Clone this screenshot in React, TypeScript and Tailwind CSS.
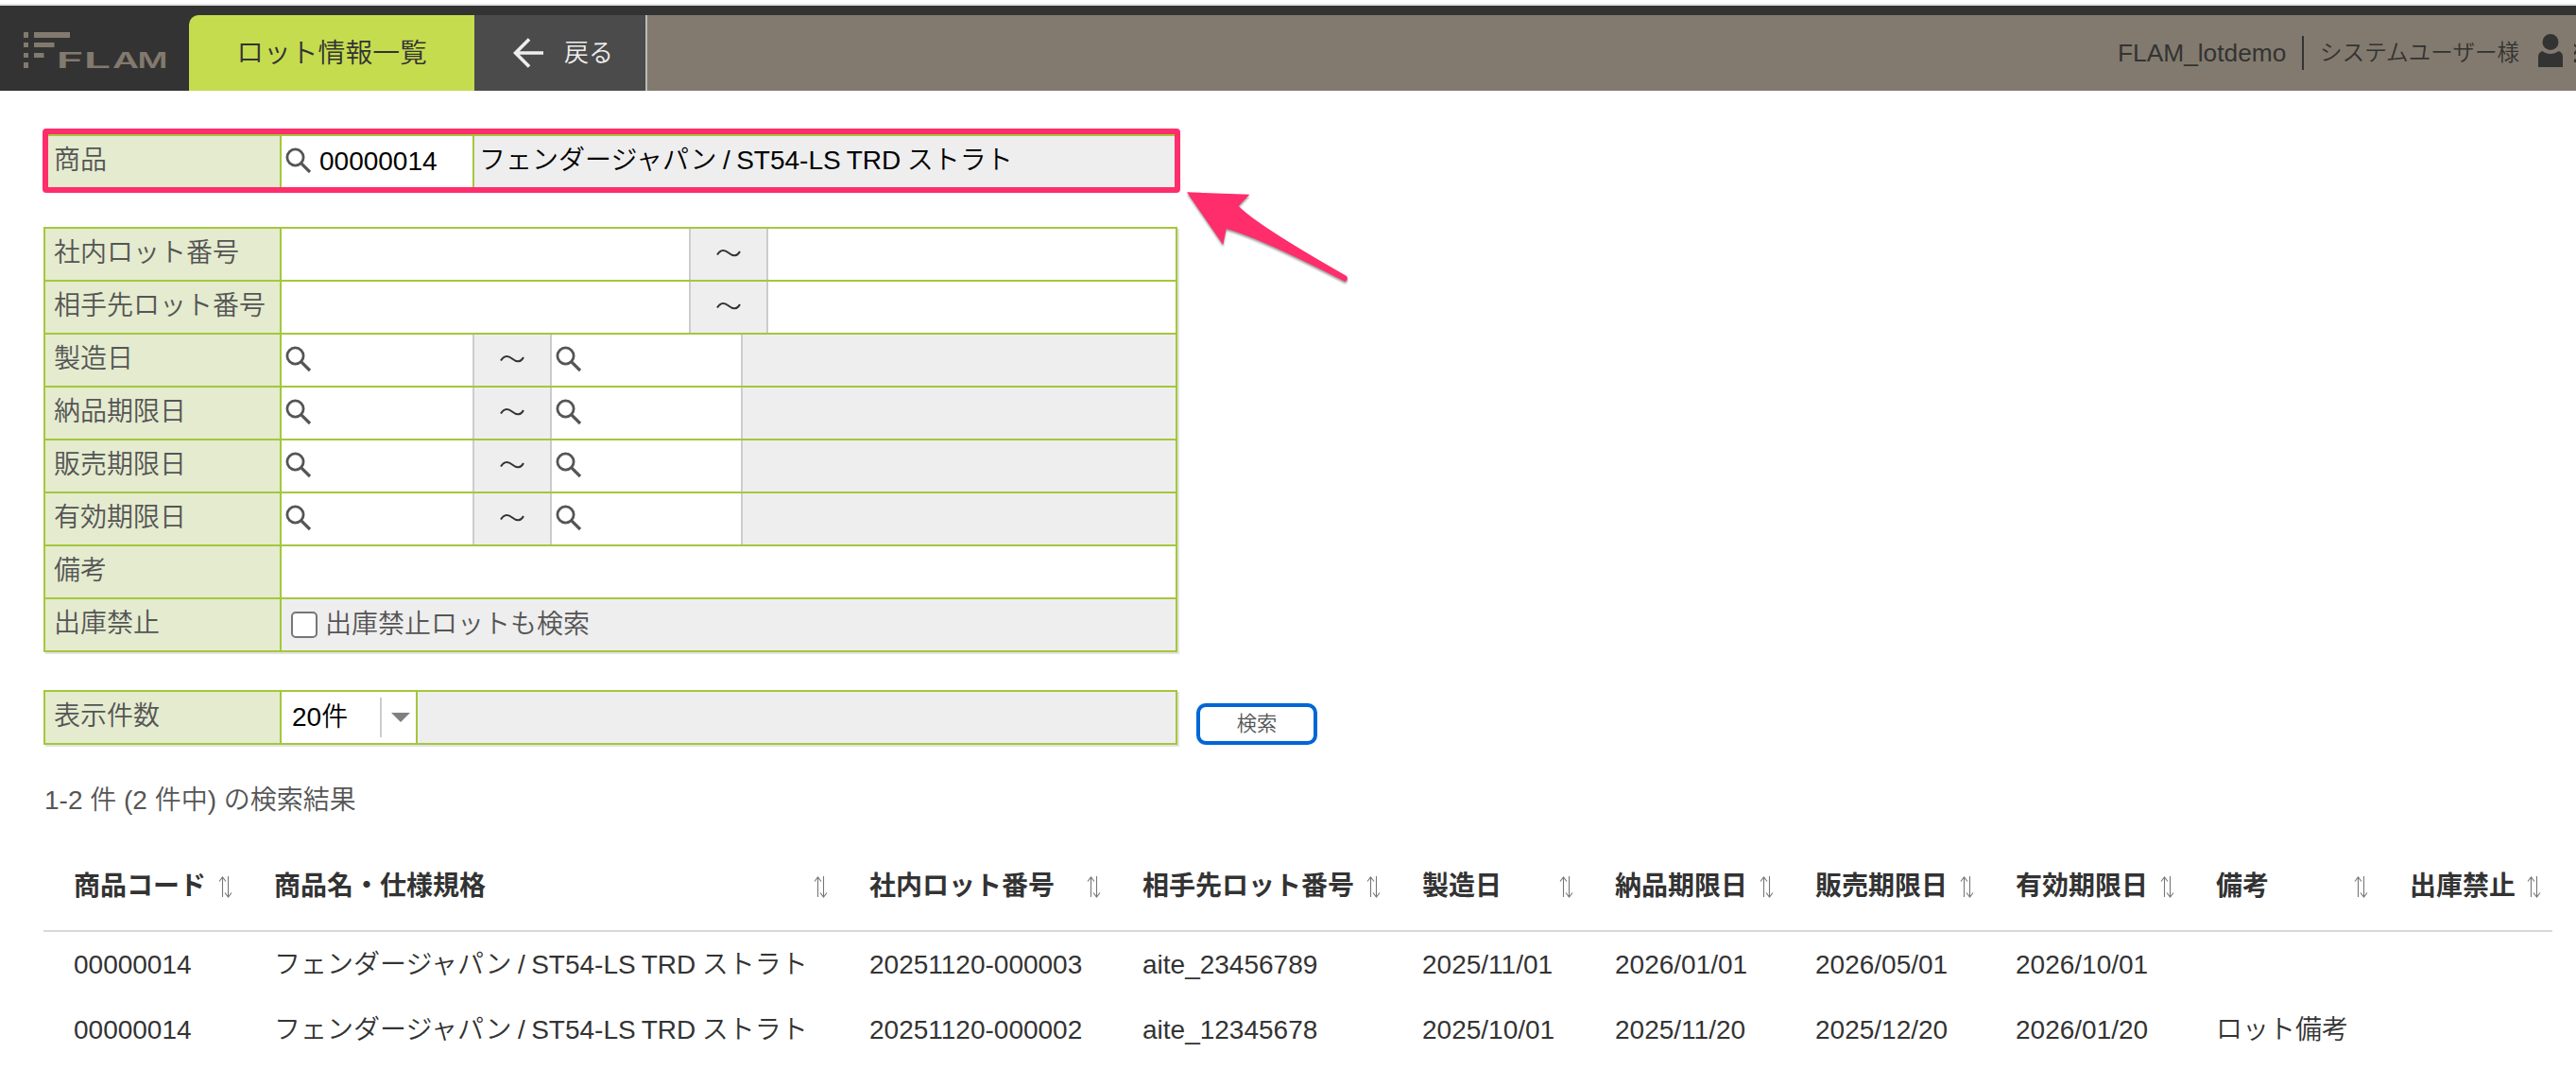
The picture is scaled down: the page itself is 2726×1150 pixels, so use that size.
import React, { useState } from "react";

type RangeRow = {
    label: string;
    kind: "text" | "date";
};

type Lot = {
    code: string;
    name: string;
    lotNo: string;
    partnerLotNo: string;
    dates: string[];
    note: string;
};

const rangeRows: RangeRow[] = [
    { label: "社内ロット番号", kind: "text" },
    { label: "相手先ロット番号", kind: "text" },
    { label: "製造日", kind: "date" },
    { label: "納品期限日", kind: "date" },
    { label: "販売期限日", kind: "date" },
    { label: "有効期限日", kind: "date" },
];

const columns = [
    { label: "商品コード", width: "w-[212px]" },
    { label: "商品名・仕様規格", width: "w-[630px]" },
    { label: "社内ロット番号", width: "w-[289px]" },
    { label: "相手先ロット番号", width: "w-[296px]" },
    { label: "製造日", width: "w-[204px]" },
    { label: "納品期限日", width: "w-[212px]" },
    { label: "販売期限日", width: "w-[212px]" },
    { label: "有効期限日", width: "w-[212px]" },
    { label: "備考", width: "w-[205px]" },
    { label: "出庫禁止", width: "w-[183px]" },
];

const lots: Lot[] = [
    {
        code: "00000014",
        name: "フェンダージャパン / ST54-LS TRD ストラト",
        lotNo: "20251120-000003",
        partnerLotNo: "aite_23456789",
        dates: ["2025/11/01", "2026/01/01", "2026/05/01", "2026/10/01"],
        note: "",
    },
    {
        code: "00000014",
        name: "フェンダージャパン / ST54-LS TRD ストラト",
        lotNo: "20251120-000002",
        partnerLotNo: "aite_12345678",
        dates: ["2025/10/01", "2025/11/20", "2025/12/20", "2026/01/20"],
        note: "ロット備考",
    },
];

// Wide letters of the logo: x position and stretched width of each
const logoLetters = [
    { char: "F", x: 34.5, length: 29 },
    { char: "L", x: 63.5, length: 29 },
    { char: "A", x: 94, length: 28 },
    { char: "M", x: 120.5, length: 32 },
];

function Logo() {
    return (
        <svg width="156" height="48" viewBox="0 0 156 48" className="ml-[25px] mt-[18px] shrink-0 overflow-visible" fill="#827a6e">
            <path d="M0 0h5v6H0zM11 0h38v6H11zM0 11h5v5H0zM11 11h21.5v5H11zM0 22h5v5H0zM11 22h10.5v5H11zM0 32h5v6H0z" />
            {logoLetters.map((letter) => (
                <text key={letter.char} x={letter.x} y="38" fontSize="22.5" fontWeight="600" fontFamily="Inter, sans-serif" textLength={letter.length} lengthAdjust="spacingAndGlyphs">
                    {letter.char}
                </text>
            ))}
        </svg>
    );
}

function SearchIcon() {
    return (
        <svg width="28" height="28" viewBox="0 0 28 28" className="-mt-[2px] shrink-0" fill="none" stroke="#555">
            <circle cx="10.5" cy="10.5" r="8.6" strokeWidth="2.8" />
            <path d="M16.8 16.8l9.2 9.2" strokeWidth="3.2" />
        </svg>
    );
}

function SortIcon() {
    return (
        <svg width="15" height="23" viewBox="0 0 15 23" className="shrink-0" fill="none" stroke="#777" strokeWidth="1.1">
            <path d="M4.500 22V1M1 5.500L4.500 1 8 5.500M10.500 0v21.500M7 17.500l3.500 4.500 3.500-4.500" />
        </svg>
    );
}

function Label({ children }: { children: React.ReactNode }) {
    return <div className="w-[250px] shrink-0 whitespace-nowrap border-r-2 border-[#a4c73c] bg-[#e4ebcf] pl-[9px] leading-[52px] text-[#555]">{children}</div>;
}

function Tilde() {
    return (
        <div className="flex w-[84px] shrink-0 items-center justify-center border-x-2 border-[#ccc] bg-[#eee]">
            <svg width="26" height="10" viewBox="0 0 26 10" className="-mt-[3px]" fill="none" stroke="#333" strokeWidth="2">
                <path d="M1 6.500C4 1.500 8 0.500 13 4.500S22 8.500 25 3" />
            </svg>
        </div>
    );
}

export default function App() {
    const [includeBlocked, setIncludeBlocked] = useState(false);

    return (
        <div className="relative h-[1150px] w-[2726px] overflow-hidden bg-white pt-1 font-['Liberation_Sans','Noto_Sans_CJK_JP',sans-serif] text-[28px] font-[350] text-[#333]">
            {/* Header */}
            <div className="h-[2px] bg-[#e0e4e0]" />
            <header className="flex h-[90px] bg-[#333]">
                <div className="flex w-[200px] items-start pt-[10px]">
                    <Logo />
                </div>
                <div className="mt-[10px] w-[302px] rounded-tl-[10px] bg-[#c6dc4f] text-center text-[28.8px] leading-[80px]">ロット情報一覧</div>
                <button className="mt-[10px] flex w-[183px] items-center border-r-2 border-[#bbb] bg-[#4b4b4b] pl-[41px] text-[#eee]">
                    <svg width="32" height="32" viewBox="0 0 32 32" fill="none" stroke="currentColor" strokeWidth="3.6">
                        <path d="M32 16H2.5M17 1.5L2.5 16 17 30.5" />
                    </svg>
                    <span className="ml-[22px] text-[26px]">戻る</span>
                </button>
                <div className="mt-[10px] flex flex-1 items-center bg-[#827a6e]">
                    <div className="ml-[1556px] w-[181px] text-[26.300px] leading-[80px]">FLAM_lotdemo</div>
                    <div className="ml-[14px] h-9 w-[2px] bg-[#333]" />
                    <div className="ml-[17px] w-[218px] whitespace-nowrap text-[23.600px] leading-[80px]">システムユーザー様</div>
                    <svg width="26" height="35" viewBox="0 0 26 35" className="ml-[13px] -mt-[5px] shrink-0" fill="#333">
                        <circle cx="13" cy="8.500" r="8.500" />
                        <path d="M0 35V24c0-3 1.500-5 4.500-6 4.500 4 12.500 4 17 0 3 1 4.500 3 4.500 6v11z" />
                    </svg>
                    <svg width="2" height="22" viewBox="0 0 2 22" className="ml-[12px] shrink-0" fill="#333">
                        <path d="M0 1l2 2v2L0 4zM0 10l2-2v4l-2 1zM0 18l2-1v4H0z" />
                    </svg>
                </div>
            </header>

            <main className="pl-[46px]">
                {/* Product */}
                <div className="relative mt-[46px] w-[1200px]">
                    <div className="flex h-[58px] border-2 border-[#a4c73c] bg-[#eee] text-black">
                        <Label>商品</Label>
                        <div className="flex w-[204px] items-center border-r-2 border-[#a4c73c] bg-white pl-1">
                            <SearchIcon />
                            <span className="ml-2">00000014</span>
                        </div>
                        <div className="pl-[5px] leading-[52px] [word-spacing:-1.3px]">フェンダージャパン / ST54-LS TRD ストラト</div>
                    </div>
                    <div className="pointer-events-none absolute -left-[1px] -top-[6px] h-[68px] w-[1204px] rounded-[4px] border-6 border-[#ff2d6c]" />
                    <svg width="180" height="106" viewBox="0 0 180 106" className="absolute left-[1206px] top-[58px] drop-shadow-[0_2px_1px_rgba(0,0,0,0.4)]" fill="#ff2d6c">
                        <path d="M4 3.300L70.300 5.700L58.700 18Q78 38 173 92Q175.500 96 171.500 98Q82 52 45.700 42L42.300 59z" />
                    </svg>
                </div>

                {/* Search conditions */}
                <div className="mt-10 w-[1200px] border-2 border-[#a4c73c] shadow-[2px_2px_0_#e3e3e3]">
                    {rangeRows.map((row) => (
                        <div key={row.label} className="flex h-14 border-b-2 border-[#a4c73c]">
                            <Label>{row.label}</Label>
                            {row.kind === "text" ? (
                                <>
                                    <div className="w-[431px] shrink-0" />
                                    <Tilde />
                                    <div className="flex-1" />
                                </>
                            ) : (
                                <>
                                    <div className="flex w-[202px] shrink-0 items-center pl-1">
                                        <SearchIcon />
                                    </div>
                                    <Tilde />
                                    <div className="flex w-[202px] shrink-0 items-center border-r-2 border-[#ccc] pl-1">
                                        <SearchIcon />
                                    </div>
                                    <div className="flex-1 bg-[#eee]" />
                                </>
                            )}
                        </div>
                    ))}
                    <div className="flex h-14 border-b-2 border-[#a4c73c]">
                        <Label>備考</Label>
                    </div>
                    <div className="flex h-[54px] bg-[#eee]">
                        <Label>出庫禁止</Label>
                        <label className="flex items-center pl-[10px] text-[#555]">
                            <input type="checkbox" checked={includeBlocked} onChange={(e) => setIncludeBlocked(e.target.checked)} className="h-7 w-7 appearance-none rounded-[5px] border-2 border-[#767676] bg-white checked:bg-[#0066d6]" />
                            <span className="ml-2 leading-[52px]">出庫禁止ロットも検索</span>
                        </label>
                    </div>
                </div>

                {/* Page size */}
                <div className="mt-10 flex">
                    <div className="flex h-[58px] w-[1200px] border-2 border-[#a4c73c] bg-[#eee] shadow-[2px_2px_0_#e3e3e3]">
                        <Label>表示件数</Label>
                        <div className="flex w-[144px] items-center border-r-2 border-[#a4c73c] bg-white pl-[11px] text-black">
                            <span className="w-[93px] leading-[52px]">20件</span>
                            <span className="h-[42px] w-[2px] bg-[#ccc]" />
                            <svg width="20" height="10" viewBox="0 0 20 10" className="ml-[10px]" fill="#808080">
                                <path d="M0 0h20L10 10z" />
                            </svg>
                        </div>
                    </div>
                    <button className="ml-5 mt-[14px] h-11 w-32 rounded-[10px] border-4 border-[#0066d6] bg-white text-[21.300px] leading-[34px] text-[#555]">検索</button>
                </div>

                <p className="mt-[39px] pl-[1px] leading-[40px] text-[#555]">1-2 件 (2 件中) の検索結果</p>

                {/* Search results */}
                <table className="mt-[24px] w-[2655px] table-fixed border-collapse">
                    <thead>
                        <tr className="h-[94px] border-b-2 border-[#d8d8d8]">
                            {columns.map((col) => (
                                <th key={col.label} className={`${col.width} pl-8 pr-3 pt-[1px] text-left font-bold`}>
                                    <div className="flex items-center justify-between whitespace-nowrap">
                                        {col.label}
                                        <SortIcon />
                                    </div>
                                </th>
                            ))}
                        </tr>
                    </thead>
                    <tbody>
                        {lots.map((lot) => (
                            <tr key={lot.lotNo} className="h-[70px] whitespace-nowrap">
                                <td className="pl-8">{lot.code}</td>
                                <td className="pl-8 [word-spacing:-1.3px]">{lot.name}</td>
                                <td className="pl-8">{lot.lotNo}</td>
                                <td className="pl-8">{lot.partnerLotNo}</td>
                                {lot.dates.map((date) => (
                                    <td key={date} className="pl-8">
                                        {date}
                                    </td>
                                ))}
                                <td className="pl-8">{lot.note}</td>
                                <td />
                            </tr>
                        ))}
                    </tbody>
                </table>
            </main>
        </div>
    );
}
